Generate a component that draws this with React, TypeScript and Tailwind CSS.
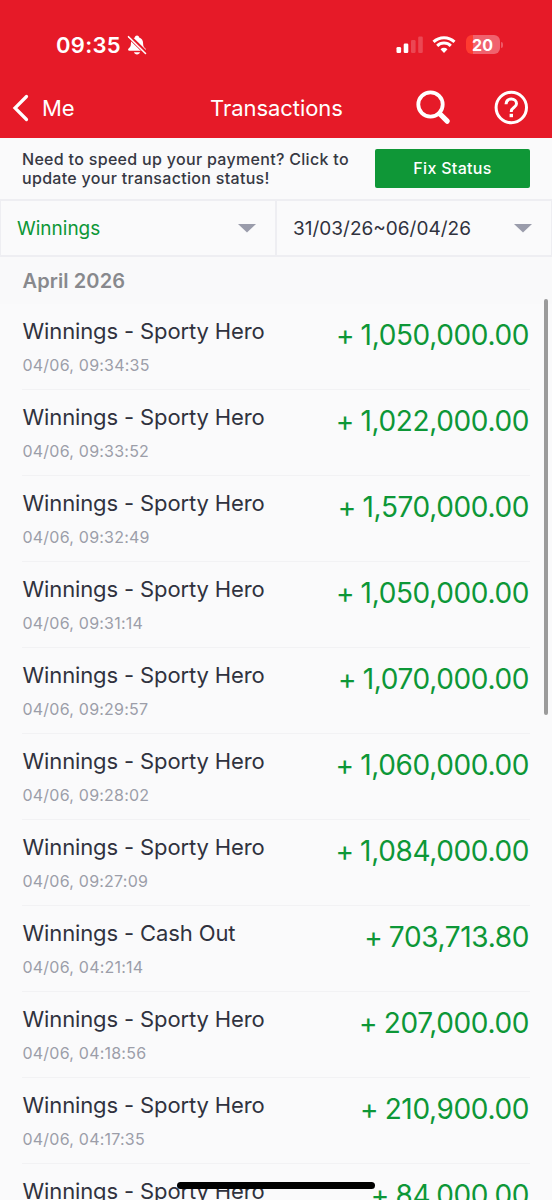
import React from "react";

interface Transaction {
  title: string;
  time: string;
  amount: string;
}

const transactions: Transaction[] = [
  { title: "Winnings - Sporty Hero", time: "04/06, 09:34:35", amount: "1,050,000.00" },
  { title: "Winnings - Sporty Hero", time: "04/06, 09:33:52", amount: "1,022,000.00" },
  { title: "Winnings - Sporty Hero", time: "04/06, 09:32:49", amount: "1,570,000.00" },
  { title: "Winnings - Sporty Hero", time: "04/06, 09:31:14", amount: "1,050,000.00" },
  { title: "Winnings - Sporty Hero", time: "04/06, 09:29:57", amount: "1,070,000.00" },
  { title: "Winnings - Sporty Hero", time: "04/06, 09:28:02", amount: "1,060,000.00" },
  { title: "Winnings - Sporty Hero", time: "04/06, 09:27:09", amount: "1,084,000.00" },
  { title: "Winnings - Cash Out", time: "04/06, 04:21:14", amount: "703,713.80" },
  { title: "Winnings - Sporty Hero", time: "04/06, 04:18:56", amount: "207,000.00" },
  { title: "Winnings - Sporty Hero", time: "04/06, 04:17:35", amount: "210,900.00" },
  { title: "Winnings - Sporty Hero", time: "04/06, 04:16:20", amount: "84,000.00" },
];

function BellOffIcon() {
  return (
    <svg width="20" height="20" viewBox="0 0 20 20" className="ml-[6px]">
      <path
        d="M10 0.5c-1.200 0-2 .8-2.200 1.900C5 3.300 3.900 5.500 3.900 8.500c0 2.700-.7 3.700-2.300 5.100-1 .9-.5 2.200.7 2.200h15.400c1.200 0 1.700-1.300.7-2.200-1.600-1.400-2.300-2.400-2.300-5.100 0-3-1.100-5.200-3.900-6.100C12 1.300 11.200.5 10 .5z"
        fill="white"
      />
      <path d="M7 17.200h6c-.4 1.400-1.500 2.200-3 2.200s-2.600-.8-3-2.200z" fill="white" />
      <path d="M1.800 1.200 19 18" stroke="#e61a28" strokeWidth="4.200" />
      <path d="M1.500 1.700 18.500 18.500" stroke="white" strokeWidth="1.600" strokeLinecap="round" />
    </svg>
  );
}

function SignalIcon() {
  return (
    <svg width="28" height="18" viewBox="0 0 28 18" fill="white">
      <rect x="0.500" y="11" width="4.600" height="6" rx="1.300" />
      <rect x="7.700" y="7.500" width="4.600" height="9.500" rx="1.300" />
      <rect x="15" y="4" width="4.600" height="13" rx="1.300" opacity="0.200" />
      <rect x="22.200" y="0.500" width="4.600" height="16.500" rx="1.300" opacity="0.200" />
    </svg>
  );
}

function WifiIcon() {
  return (
    <svg width="24" height="18" viewBox="0 0 24 18" fill="none" stroke="white" strokeWidth="3">
      <path d="M1.500 5.900a15.200 15.200 0 0 1 21 0" />
      <path d="M5.200 9.900a9.700 9.700 0 0 1 13.600 0" />
      <path d="M8.500 13.300a5 5 0 0 1 7 0L12 17z" fill="white" stroke="none" />
    </svg>
  );
}

function StatusBar() {
  return (
    <div className="flex h-[78px] items-start justify-between pl-[56px] pr-[49px] pt-[35px] text-white">
      <div className="flex h-5 items-center">
        <span className="text-[22px] font-semibold leading-5 tracking-[0.3px]">09:35</span>
        <BellOffIcon />
      </div>
      <div className="flex h-[19px] items-center">
        <SignalIcon />
        <div className="ml-[8px]">
          <WifiIcon />
        </div>
        <div className="ml-[10px] flex h-[19px] w-[34px] items-center justify-center rounded-[6px] bg-[linear-gradient(to_right,#ff3b30_20%,#f0626e_20%)] text-[16px] font-bold leading-none">
          20
        </div>
        <div className="ml-[1.500px] h-[6px] w-[2px] rounded-r-full bg-[#ee5965]" />
      </div>
    </div>
  );
}

function NavBar() {
  return (
    <div className="flex h-[60px] items-center text-[22px] text-white">
      <div className="flex w-[210px] items-center pl-[12px]">
        <svg width="17" height="28" viewBox="0 0 17 28" fill="none" stroke="white" strokeWidth="3.200">
          <path d="M14.500 2.500 3 14l11.500 11.500" strokeLinecap="round" strokeLinejoin="miter" />
        </svg>
        <span className="ml-[13px] tracking-[-0.2px]">Me</span>
      </div>
      <span className="w-[206px] tracking-[-0.05px]">Transactions</span>
      <svg width="35" height="36" viewBox="0 0 35 36" fill="none" stroke="white" strokeLinecap="round">
        <circle cx="14.500" cy="14.500" r="12.200" strokeWidth="3.800" />
        <path d="m23.500 23.500 7.700 7.700" strokeWidth="5.200" />
      </svg>
      <svg width="36" height="36" viewBox="0 0 36 36" fill="none" stroke="white" className="ml-[42px]">
        <circle cx="18.300" cy="17.500" r="15.200" strokeWidth="3" />
        <path d="M13 14.200c0-3.200 2.200-5.100 5.300-5.100 3 0 5.200 1.900 5.200 4.600 0 3.700-5.200 3.800-5.200 7.500v.7" strokeWidth="3" />
        <path d="M18.300 23.800v3.400" strokeWidth="3.400" />
      </svg>
    </div>
  );
}

function CaretDown() {
  return (
    <svg width="18" height="9" viewBox="0 0 18 9">
      <path d="M0 0h18L9 8.500z" fill="#9a9cab" />
    </svg>
  );
}

function TransactionRow({ title, time, amount }: Transaction) {
  return (
    <div className="flex h-[86px] shrink-0 justify-between border-b border-[#f2f2f4]">
      <div className="flex flex-col pl-[0.500px] pt-[13px]">
        <span className="text-[22px] leading-[28px] tracking-[-0.12px] text-[#30323e]">{title}</span>
        <span className="mt-[10px] text-[16px] leading-5 tracking-[0.22px] text-[#9c9ea9]">{time}</span>
      </div>
      <span className="pr-px pt-[13px] text-[28px] leading-[36px] tracking-[-0.36px] [word-spacing:-1px] text-[#0d9737]">
        + {amount}
      </span>
    </div>
  );
}

export default function App() {
  return (
    <div className="relative flex h-[1200px] w-[552px] flex-col overflow-hidden bg-[#fafafb] font-['Inter',sans-serif]">
      <header className="h-[138px] shrink-0 bg-[#e61a28]">
        <StatusBar />
        <NavBar />
      </header>

      {/* Payment notice */}
      <div className="flex h-[61px] shrink-0 items-center justify-between pl-[22px] pr-[22px]">
        <p className="whitespace-nowrap text-[16px] font-medium leading-[19px] tracking-[0.31px] text-[#363843]">
          Need to speed up your payment? Click to
          <br />
          update your transaction status!
        </p>
        <button className="h-[39px] w-[155px] rounded-[2px] bg-[#0f9737] pb-[2px] text-[16px] font-medium tracking-[0.3px] text-white">
          Fix Status
        </button>
      </div>

      {/* Filters */}
      <div className="flex h-[58px] shrink-0 border-y-2 border-x border-[#eeeef2] text-[19px]">
        <button className="flex w-[276px] items-center justify-between border-r-2 border-[#eeeef2] pl-[16px] pr-[19px] text-[#0d9737]">
          <span className="pt-[2px]">Winnings</span>
          <CaretDown />
        </button>
        <button className="flex flex-1 items-center justify-between pl-[16px] pr-[19px] text-[#30323e]">
          <span className="pt-[2px]">31/03/26~06/04/26</span>
          <CaretDown />
        </button>
      </div>

      <div className="flex h-[47px] shrink-0 items-center bg-[#f9f9fa] px-[22.500px] pt-px text-[20px] font-semibold tracking-[0.1px] text-[#88898d]">
        April 2026
      </div>

      <div className="flex flex-col px-[22px]">
        {transactions.map((item) => (
          <TransactionRow key={item.time} {...item} />
        ))}
      </div>

      {/* Scrollbar */}
      <div className="absolute right-[4px] top-[299px] h-[416px] w-[4px] rounded-full bg-[#9b9b9b]" />
      {/* Home indicator */}
      <div className="absolute left-[177px] top-[1182px] h-[7px] w-[198px] rounded-full bg-black" />
    </div>
  );
}
